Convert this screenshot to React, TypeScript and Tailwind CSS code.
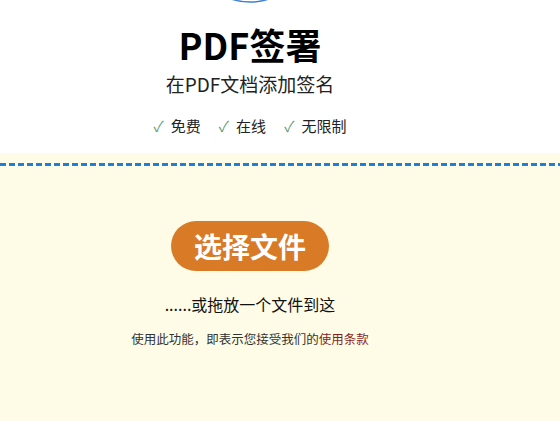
export default function App() {
  return (
    <div
      className="w-[560px] h-[421px] overflow-hidden bg-white"
      style={{ fontFamily: '"Noto Sans CJK SC", "Noto Sans", sans-serif' }}
    >
      <div className="w-[500px] flex flex-col items-center">
        <svg width="120" height="60" viewBox="0 0 120 60" className="-mt-[56px]">
          <circle cx="60" cy="0" r="58" fill="none" stroke="#3b7fd0" strokeWidth="1.5" />
        </svg>
        <h1 className="mt-[18px] text-[36px] leading-[44px] font-bold text-black">PDF签署</h1>
        <p className="mt-[4px] text-[19px] leading-[28px] text-[#222]">在PDF文档添加签名</p>
        <div className="mt-[17px] flex items-center gap-[18px] text-[15px] leading-[22px] text-[#222]">
          <span>
            <span className="text-[#5f9f78] mr-[7px]">✓</span>免费
          </span>
          <span>
            <span className="text-[#5f9f78] mr-[7px]">✓</span>在线
          </span>
          <span>
            <span className="text-[#5f9f78] mr-[7px]">✓</span>无限制
          </span>
        </div>
      </div>
      <div className="mt-[16px] h-[300px] bg-[#fefce6] pt-[10px]">
        <div className="h-[3px] w-full bg-[repeating-linear-gradient(90deg,#1f7fd8_0px,#1f7fd8_6px,transparent_6px,transparent_9px)]" />
        <div className="w-[500px] flex flex-col items-center">
          <button className="mt-[55px] w-[158px] h-[50px] rounded-full bg-[#d97b26] text-white text-[28px] font-bold leading-none">
            选择文件
          </button>
          <p className="mt-[21px] text-[16px] leading-[24px] text-[#111]">......或拖放一个文件到这</p>
          <p className="mt-[14px] text-[12.5px] leading-[18px] text-[#333]">
            使用此功能，即表示您接受我们的<span className="text-[#8b1c1c]">使用条款</span>
          </p>
        </div>
      </div>
    </div>
  );
}
